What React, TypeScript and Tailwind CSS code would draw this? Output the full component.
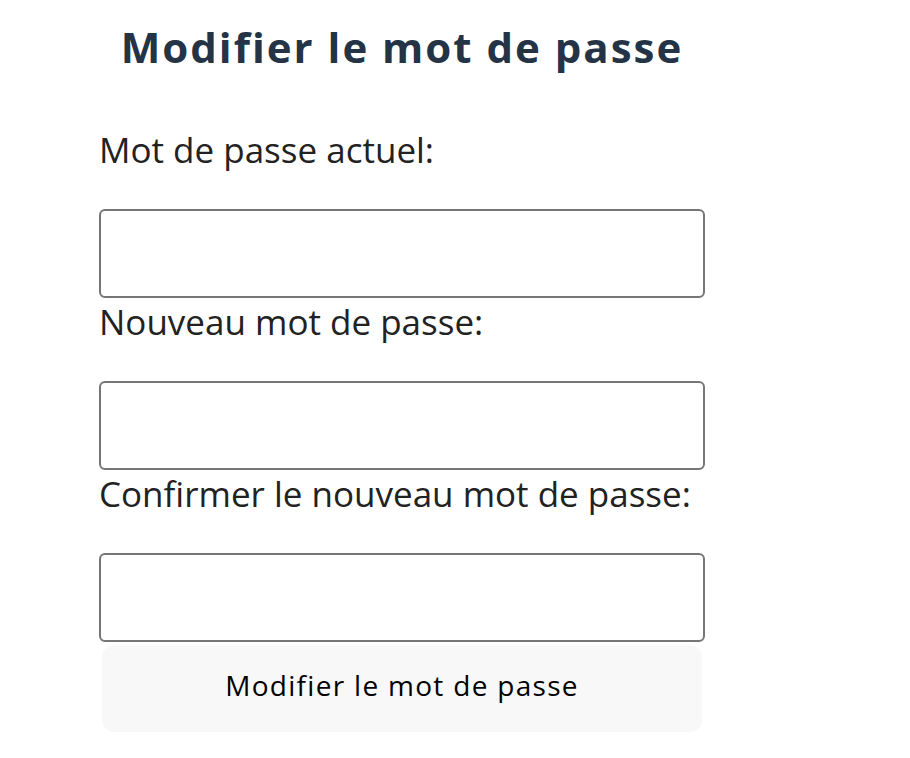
import React from "react";

const fields = ["Mot de passe actuel:", "Nouveau mot de passe:", "Confirmer le nouveau mot de passe:"];

export default function App() {
  return (
    <div className="min-h-screen bg-white font-['Open_Sans',sans-serif]">
      <form className="ml-[99px] flex w-[606px] flex-col pt-[18px]">
        <h1 className="text-center text-[42px] font-bold leading-[57px] tracking-[2px] text-[#243446]">Modifier le mot de passe</h1>
        <div className="mt-[51px] flex flex-col">
          {fields.map((label) => (
            <label key={label} className="flex flex-col">
              <span className="text-[35px] leading-[48px] text-[#222]">{label}</span>
              <input type="password" className="mt-[35px] h-[89px] rounded-[6px] border-2 border-[#767676] bg-white" />
            </label>
          ))}
        </div>
        <button type="button" className="mx-[3px] mt-[3px] h-[87px] rounded-[12px] bg-[#f8f8f8] pb-[8px] text-[28px] tracking-[1.3px] text-black">
          Modifier le mot de passe
        </button>
      </form>
    </div>
  );
}
